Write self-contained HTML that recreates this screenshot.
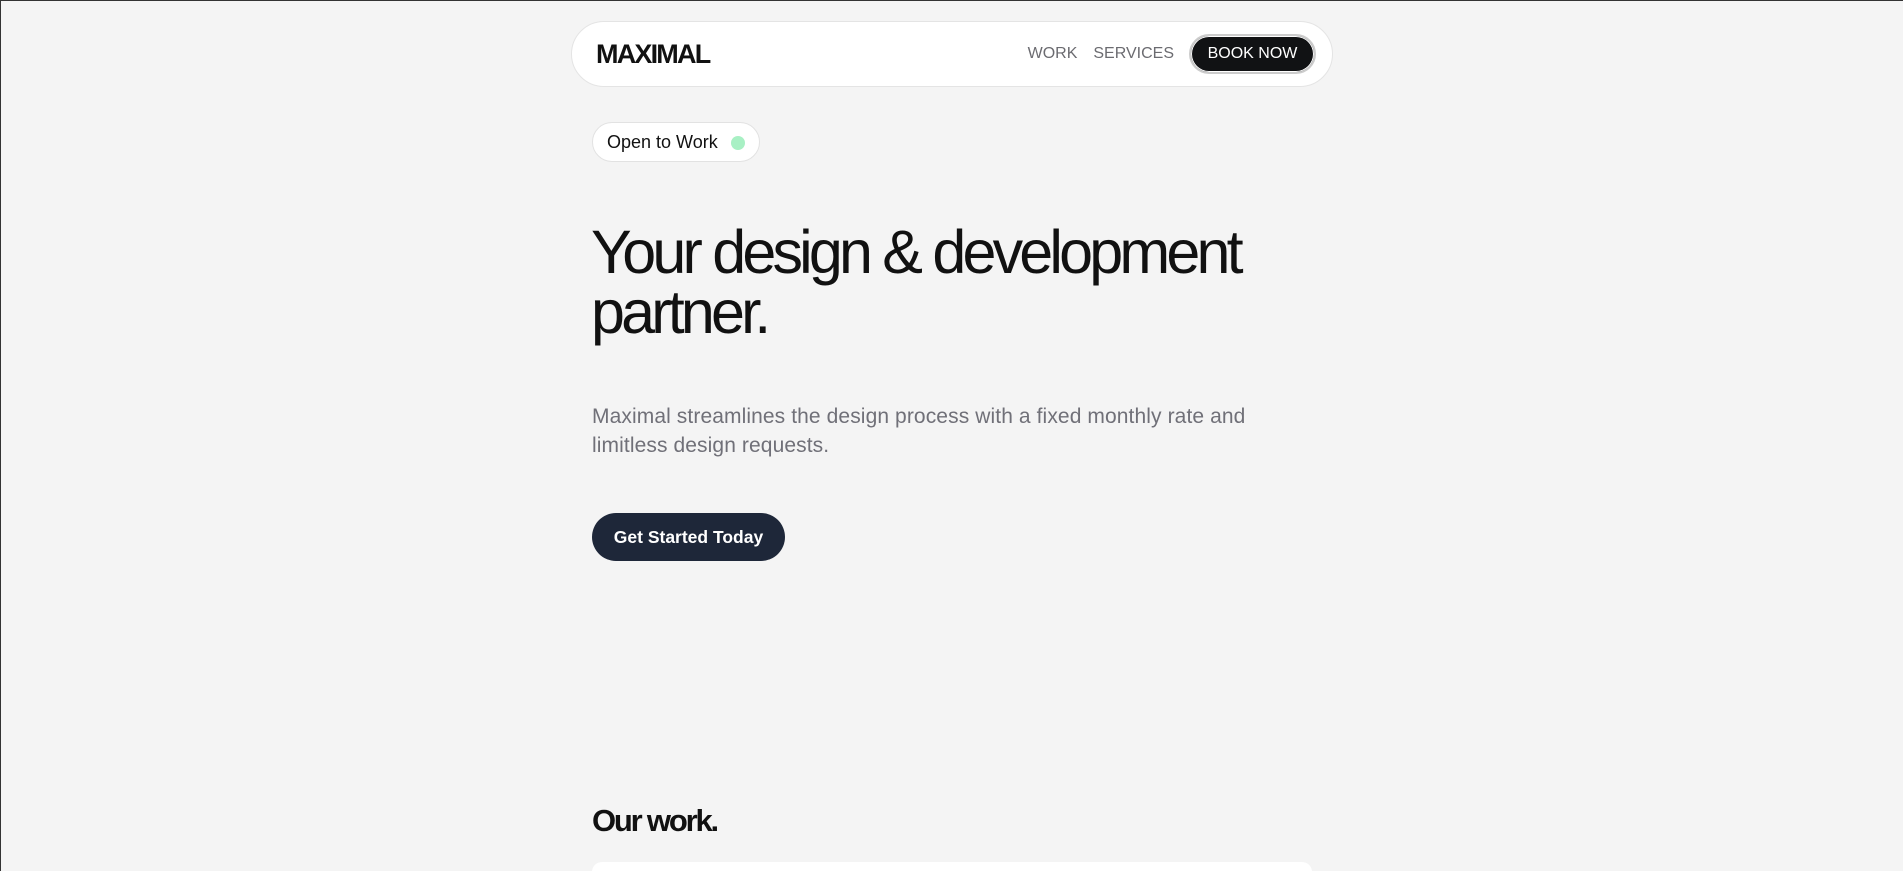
<!DOCTYPE html>
<html><head><meta charset="utf-8"><style>
*{margin:0;padding:0;box-sizing:border-box}
html,body{width:1903px;height:871px;overflow:hidden;background:#f4f4f4;font-family:"Liberation Sans",sans-serif}
body{position:relative;border-top:1px solid #333;border-left:1px solid #333}
.nav{position:absolute;left:570px;top:20px;width:762px;height:66px;background:#fff;border:1px solid #e4e4e4;border-radius:40px}
.logo{position:absolute;left:24px;top:17px;font-size:27px;font-weight:700;letter-spacing:-1.8px;color:#111}
.links{position:absolute;right:16px;top:12px;display:flex;align-items:center}
.links a{font-size:16px;color:#6b6b70;margin-right:15px;text-decoration:none}
.links a:first-child{margin-right:16px}
.btn{background:#111214;color:#fff;border-radius:22px;height:40px;width:127px;display:flex;align-items:center;justify-content:center;font-size:16px;border:2px solid #ccc;box-shadow:0 0 0 1px #fff inset}
.badge{position:absolute;left:591px;top:121px;width:168px;height:40px;background:#fff;border:1px solid #e2e2e2;border-radius:20px;font-size:18px;color:#111;padding:9px 0 0 14px}
.dot{position:absolute;left:138px;top:13px;width:14px;height:14px;border-radius:50%;background:#a8f0c4}
h1{position:absolute;left:590px;top:221px;font-size:61px;line-height:60px;font-weight:400;letter-spacing:-3.8px;color:#111}
p{position:absolute;left:591px;top:401px;width:680px;font-size:21px;line-height:29px;color:#707078;letter-spacing:0.1px}
.cta{position:absolute;left:591px;top:512px;width:193px;height:48px;background:#1e2739;border-radius:24px;color:#fff;font-weight:700;font-size:17.5px;display:flex;align-items:center;justify-content:center}
h2{position:absolute;left:591px;top:802px;font-size:31px;font-weight:700;letter-spacing:-2.2px;color:#111}
.card{position:absolute;left:591px;top:861px;width:720px;height:10px;background:#fff;border-radius:24px 24px 0 0}
</style></head><body>
<div class="nav"><div class="logo">MAXIMAL</div>
<div class="links"><a>WORK</a><a>SERVICES</a><div class="btn">BOOK NOW</div></div></div>
<div class="badge">Open to Work<span class="dot"></span></div>
<h1>Your design &amp; development<br>partner.</h1>
<p>Maximal streamlines the design process with a fixed monthly rate and<br>limitless design requests.</p>
<div class="cta">Get Started Today</div>
<h2>Our work.</h2>
<div class="card"></div>
</body></html>
